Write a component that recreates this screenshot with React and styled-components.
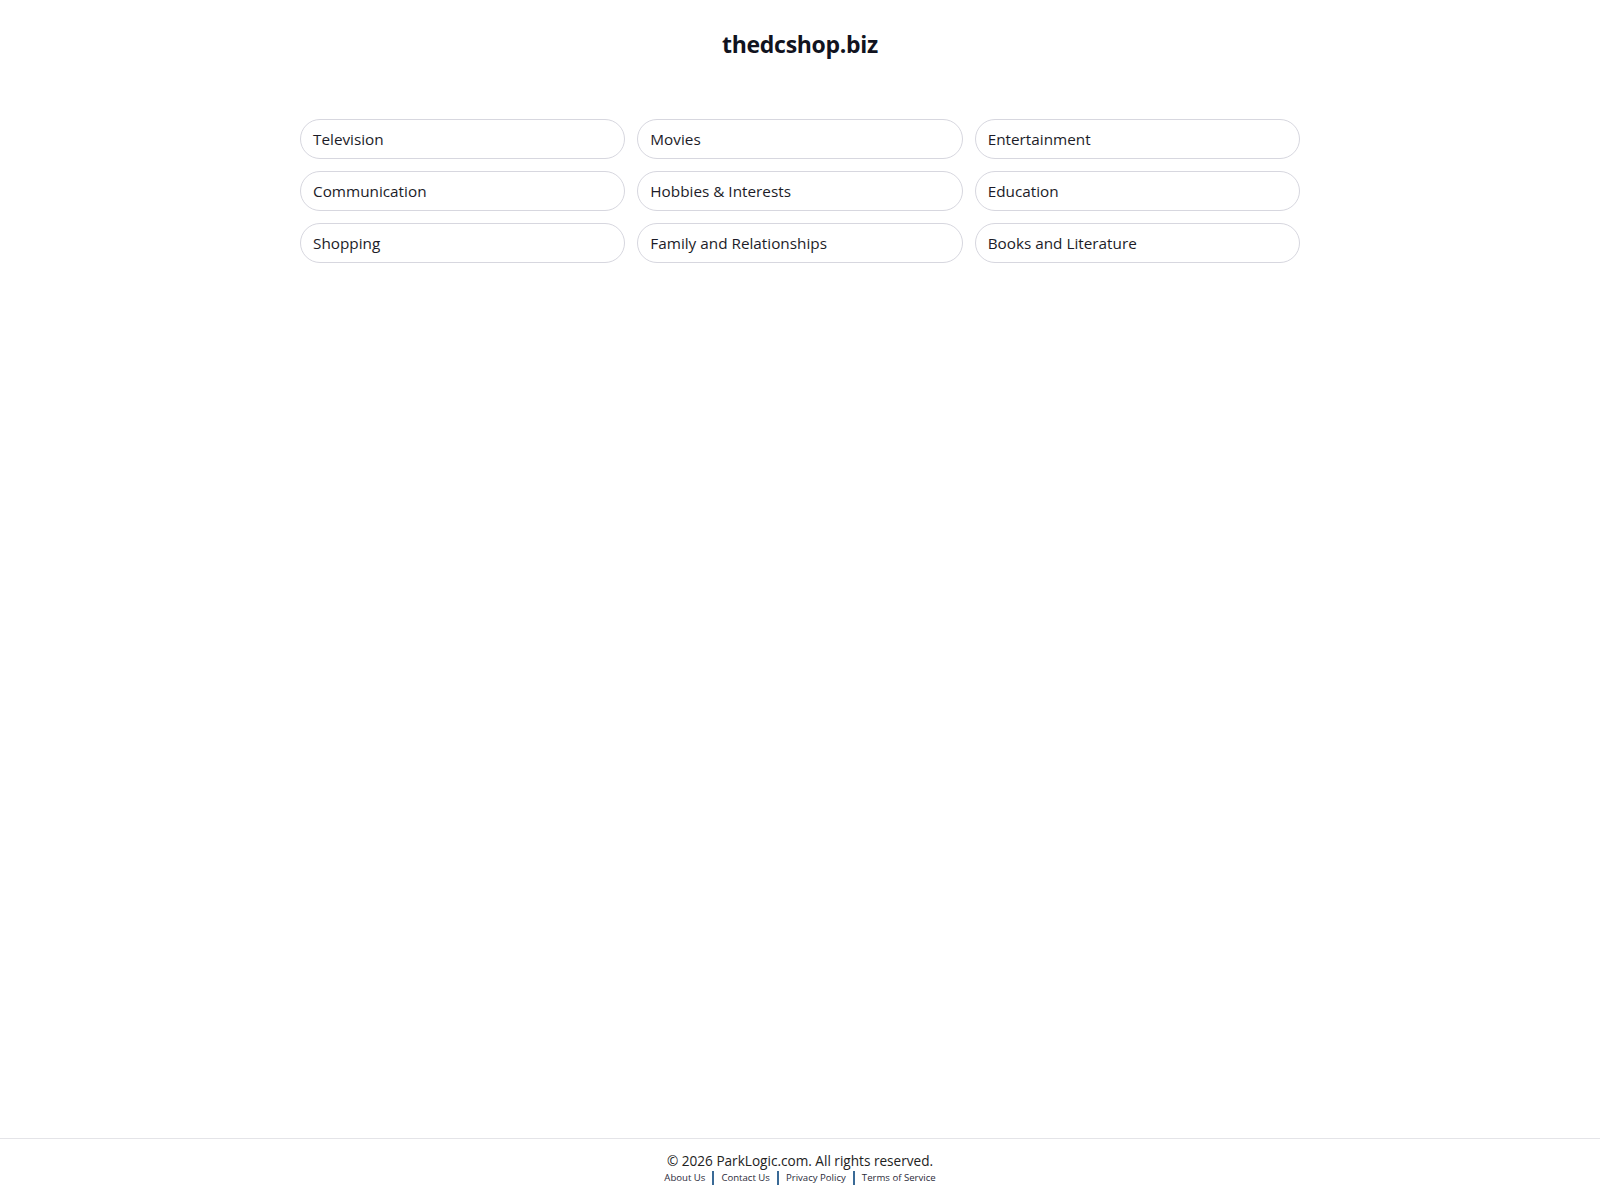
import styled, { createGlobalStyle } from "styled-components";

const categories = [
  "Television",
  "Movies",
  "Entertainment",
  "Communication",
  "Hobbies & Interests",
  "Education",
  "Shopping",
  "Family and Relationships",
  "Books and Literature",
];

const links = ["About Us", "Contact Us", "Privacy Policy", "Terms of Service"];

export default function App() {
  return (
    <>
      <GlobalStyle />
      <Page>
        <Main>
          <Title>thedcshop.biz</Title>
          <Grid>
            {categories.map((c) => (
              <Pill key={c} href="#">{c}</Pill>
            ))}
          </Grid>
        </Main>
        <Footer>
          <Copy>© 2026 ParkLogic.com. All rights reserved.</Copy>
          <Links>
            {links.map((l, i) => (
              <FootLink key={l} href="#" $first={i === 0}>{l}</FootLink>
            ))}
          </Links>
        </Footer>
      </Page>
    </>
  );
}

const GlobalStyle = createGlobalStyle`
  body {
    margin: 0;
    background: #fff;
    font-family: "Open Sans", "Noto Sans", sans-serif;
    color: #1c1c28;
  }
`;

const Page = styled.div`
  min-height: 100vh;
  display: flex;
  flex-direction: column;
`;

const Main = styled.main`
  flex: 1;
  display: flex;
  flex-direction: column;
  align-items: center;
`;

const Title = styled.h1`
  margin: 28px 0 0;
  font-size: 23px;
  line-height: 32px;
  font-weight: 700;
  letter-spacing: -0.3px;
  color: #111320;
`;

const Grid = styled.div`
  width: 1000px;
  margin-top: 59px;
  display: grid;
  grid-template-columns: repeat(3, 1fr);
  gap: 12px;
`;

const Pill = styled.a`
  height: 40px;
  box-sizing: border-box;
  display: flex;
  align-items: center;
  padding: 0 12px 1px;
  border: 1px solid #d7d7df;
  border-radius: 20px;
  font-size: 15.3px;
  color: #1c1c28;
  text-decoration: none;
`;

const Footer = styled.footer`
  border-top: 1px solid #e4e4e8;
  height: 62px;
  display: flex;
  flex-direction: column;
  align-items: center;
  padding-top: 13px;
  box-sizing: border-box;
`;

const Copy = styled.div`
  font-size: 13.6px;
  line-height: 18px;
  color: #222;
`;

const Links = styled.div`
  display: flex;
  align-items: center;
  margin-top: 1px;
`;

const FootLink = styled.a`
  font-size: 9.6px;
  line-height: 14px;
  color: #2b2b3a;
  text-decoration: none;
  padding: 0 7px;
  border-left: ${(p) => (p.$first ? "none" : "2px solid #3a6a96")};
`;
